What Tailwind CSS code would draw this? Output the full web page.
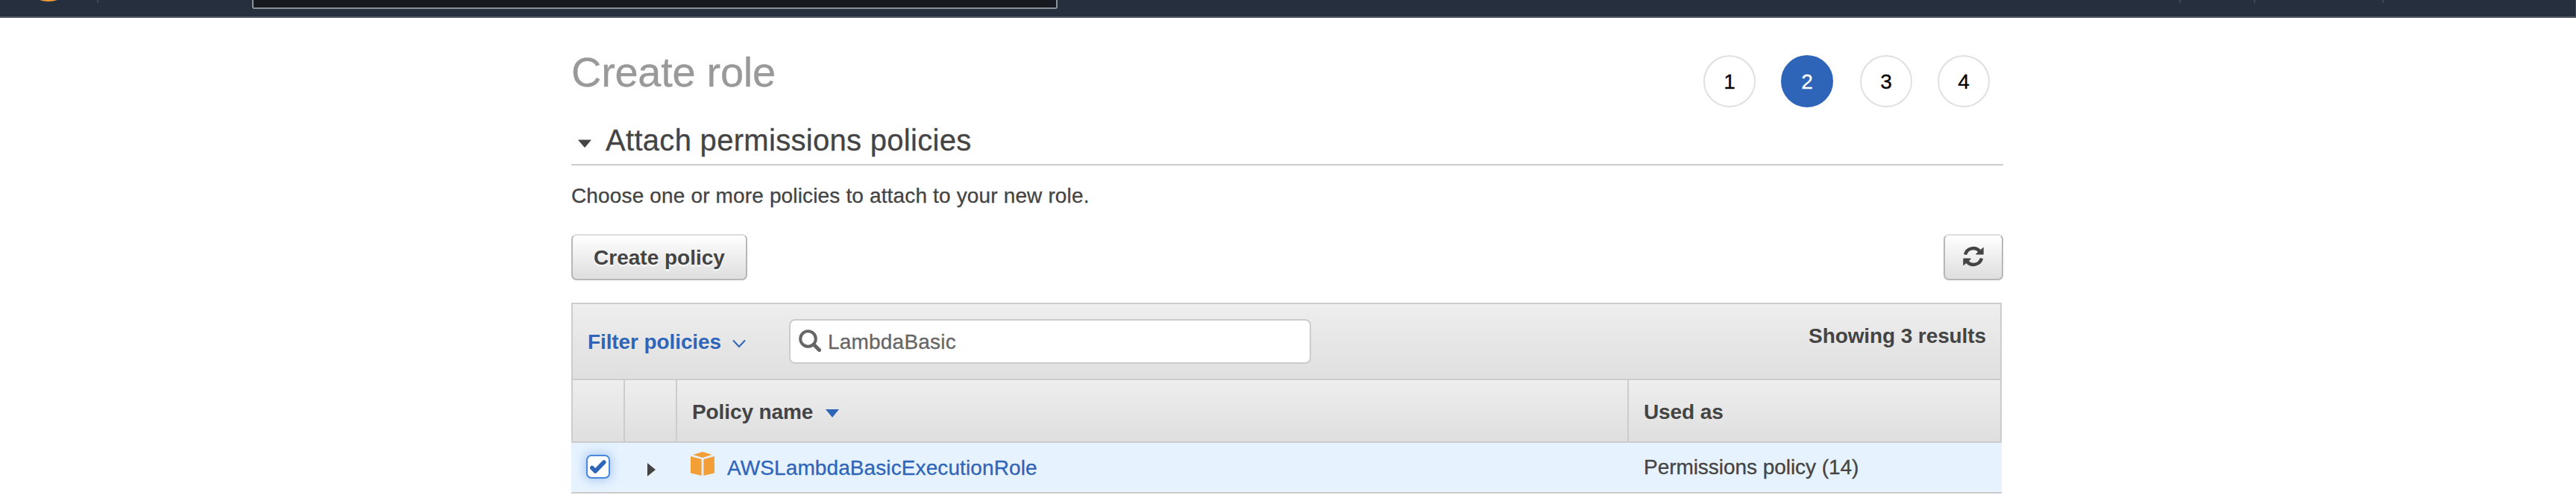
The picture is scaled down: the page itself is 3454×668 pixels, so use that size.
<!DOCTYPE html>
<html lang="en">
<head>
<meta charset="utf-8">
<title>Create role</title>
<script src="https://cdn.jsdelivr.net/npm/@tailwindcss/browser@4"></script>
</head>
<body class="h-[668px] overflow-hidden bg-white font-['Liberation_Sans',Arial,sans-serif] text-[28px] leading-10 text-[#444] [-webkit-text-stroke:0.3px]">
  <nav class="flex h-6 items-start overflow-hidden border-b-2 border-[#525a66] bg-[#252f3e]">
    <svg class="ml-[53px] h-[2px] w-6" viewBox="0 0 24 2"><path d="M0 0H24Q18 2 12 2T0 0Z" fill="#f79c34"/></svg>
    <div class="ml-[53px] h-1 w-[2px] bg-[#414852]"></div>
    <div class="ml-[206px] h-3 w-[1080px] rounded-b-[3px] border-2 border-t-0 border-[#879596] bg-[#16191f]"></div>
    <div class="ml-[1504px] h-1 w-[2px] bg-[#414852]"></div>
    <div class="ml-[98px] h-1 w-[2px] bg-[#414852]"></div>
    <div class="ml-[170px] h-1 w-[2px] bg-[#414852]"></div>
    <div class="ml-auto h-[22px] w-px bg-[#3d4653]"></div>
  </nav>

  <main class="ml-[766px] w-[1920px]">
    <header class="flex h-[136px] items-start justify-between">
      <h1 class="mt-[41px] text-[56px] leading-[64px] tracking-[-0.3px] text-[#999]">Create role</h1>
      <ol class="mt-[50px] mr-[18px] flex text-center text-black">
        <li class="size-[70px] rounded-full border-2 border-[#e0e0e0] leading-[68px]">1</li>
        <li class="ml-[34px] size-[70px] rounded-full border-2 border-[#2e65b8] bg-[#2e65b8] leading-[68px] text-white">2</li>
        <li class="ml-9 size-[70px] rounded-full border-2 border-[#e0e0e0] leading-[68px]">3</li>
        <li class="ml-[34px] size-[70px] rounded-full border-2 border-[#e0e0e0] leading-[68px]">4</li>
      </ol>
    </header>

    <div class="flex h-[62px] items-start border-b-2 border-[#ccc]">
      <svg class="mt-[27px] ml-[8px] h-[11px] w-5" viewBox="0 0 20 11"><path d="M1 0.500H19L10.8 10.3Q10 11 9.2 10.3Z" fill="#444"/></svg>
      <h2 class="mt-2 ml-[18px] text-[40px] tracking-[0.3px]">Attach permissions policies</h2>
    </div>

    <p class="mt-[21px] tracking-[0.15px]">Choose one or more policies to attach to your new role.</p>

    <div class="mt-[31px] flex justify-between">
      <button class="h-[62px] w-[236px] rounded-[7px] border-2 border-[#b7b7b7] border-t-[#ddd] bg-linear-to-b from-white to-[#dedede] pt-[2px] font-bold [text-shadow:0_2px_2px_#fff] [-webkit-text-stroke:0]">Create policy</button>
      <button class="flex h-[62px] w-20 items-center justify-center rounded-[7px] border-2 border-[#b7b7b7] border-t-[#ddd] bg-linear-to-b from-white to-[#dedede]" aria-label="Refresh">
        <svg class="mb-[2px] size-7" viewBox="0 0 28 28"><g fill="none" stroke="#444" stroke-width="4.500"><path d="M3 11.500A11.300 11.300 0 0 1 22.500 7"/><path d="M25 16.500A11.300 11.300 0 0 1 5.500 21"/></g><path d="M27.700 1.500V11.500H17.500V10.300Z M0.300 26.500V16.500H10.500V17.700Z" fill="#444"/></svg>
      </button>
    </div>

    <section class="mt-[30px] w-[1918px]">
      <div class="flex h-[104px] items-start border-2 border-[#ccc] bg-linear-to-b from-[#eee] to-[#dfdfdf]">
        <div class="mt-[31px] ml-5 flex w-[270px] items-start font-bold tracking-[-0.1px] text-[#2e65b8] [-webkit-text-stroke:0]">
          Filter policies
          <svg class="mt-4 ml-[14px] h-3 w-5" viewBox="0 0 20 12" fill="none" stroke="#2e65b8" stroke-width="2"><path d="M2 1.500L10 10L18 1.500"/></svg>
        </div>
        <div class="mt-5 flex h-[60px] w-[700px] items-start rounded-lg border-2 border-[#ccc] bg-white text-[#666]">
          <svg class="mt-3 ml-[11px] size-[30px]" viewBox="0 0 30 30" fill="none" stroke="#666"><circle cx="12.500" cy="12.500" r="10.300" stroke-width="4"/><path d="M20 20L27.500 27.500" stroke-width="5" stroke-linecap="round"/></svg>
          <span class="mt-[9px] ml-[9px] tracking-[0.2px]">LambdaBasic</span>
        </div>
        <div class="mt-[23px] mr-[19px] ml-auto font-bold tracking-[-0.1px] [-webkit-text-stroke:0]">Showing 3 results</div>
      </div>

      <div class="flex h-[84px] border-x-2 border-b-2 border-[#ccc] bg-linear-to-b from-[#eee] to-[#dfdfdf] font-bold [-webkit-text-stroke:0]">
        <div class="w-[70px] border-r-2 border-[#ccc]"></div>
        <div class="w-[70px] border-r-2 border-[#ccc]"></div>
        <div class="flex w-[1276px] items-start border-r-2 border-[#ccc] pt-[23px] pl-5 tracking-[-0.1px]">
          Policy name
          <svg class="mt-4 ml-4 h-[11px] w-5" viewBox="0 0 20 11"><path d="M1 0H19L10 11Z" fill="#2e65b8"/></svg>
        </div>
        <div class="pt-[23px] pl-5 tracking-[-0.1px]">Used as</div>
      </div>

      <div class="flex h-[68px] items-start border-b-2 border-[#ccc] bg-[#e6f2fe]">
        <div class="mt-4 ml-5 size-8 rounded-[7px] border-2 border-[#4787dc] bg-white shadow-[0_0_14px_1px_#9dc0f0]">
          <svg class="size-7" viewBox="0 0 28 28" fill="none" stroke="#2e65b8" stroke-width="5.500" stroke-linecap="round" stroke-linejoin="round"><path d="M5.800 15.500L10.200 20L21.800 8"/></svg>
        </div>
        <svg class="mt-[27px] ml-[50px] h-[18px] w-[11px]" viewBox="0 0 11 18"><path d="M0 0L11 9L0 18Z" fill="#444"/></svg>
        <svg class="mt-3 ml-[47px] size-8" viewBox="0 0 32 32" fill="#f29f38"><path d="M16 0L28.700 4L16 8L3.300 4ZM0 6L14.600 10V32L0 28.500ZM32 6L17.400 10V32L32 28.500Z"/></svg>
        <a class="mt-[14px] ml-[17px] w-[1229px] tracking-[0.1px] text-[#2e65b8]">AWSLambdaBasicExecutionRole</a>
        <div class="mt-[13px] tracking-[-0.05px]">Permissions policy (14)</div>
      </div>
    </section>
  </main>
</body>
</html>
